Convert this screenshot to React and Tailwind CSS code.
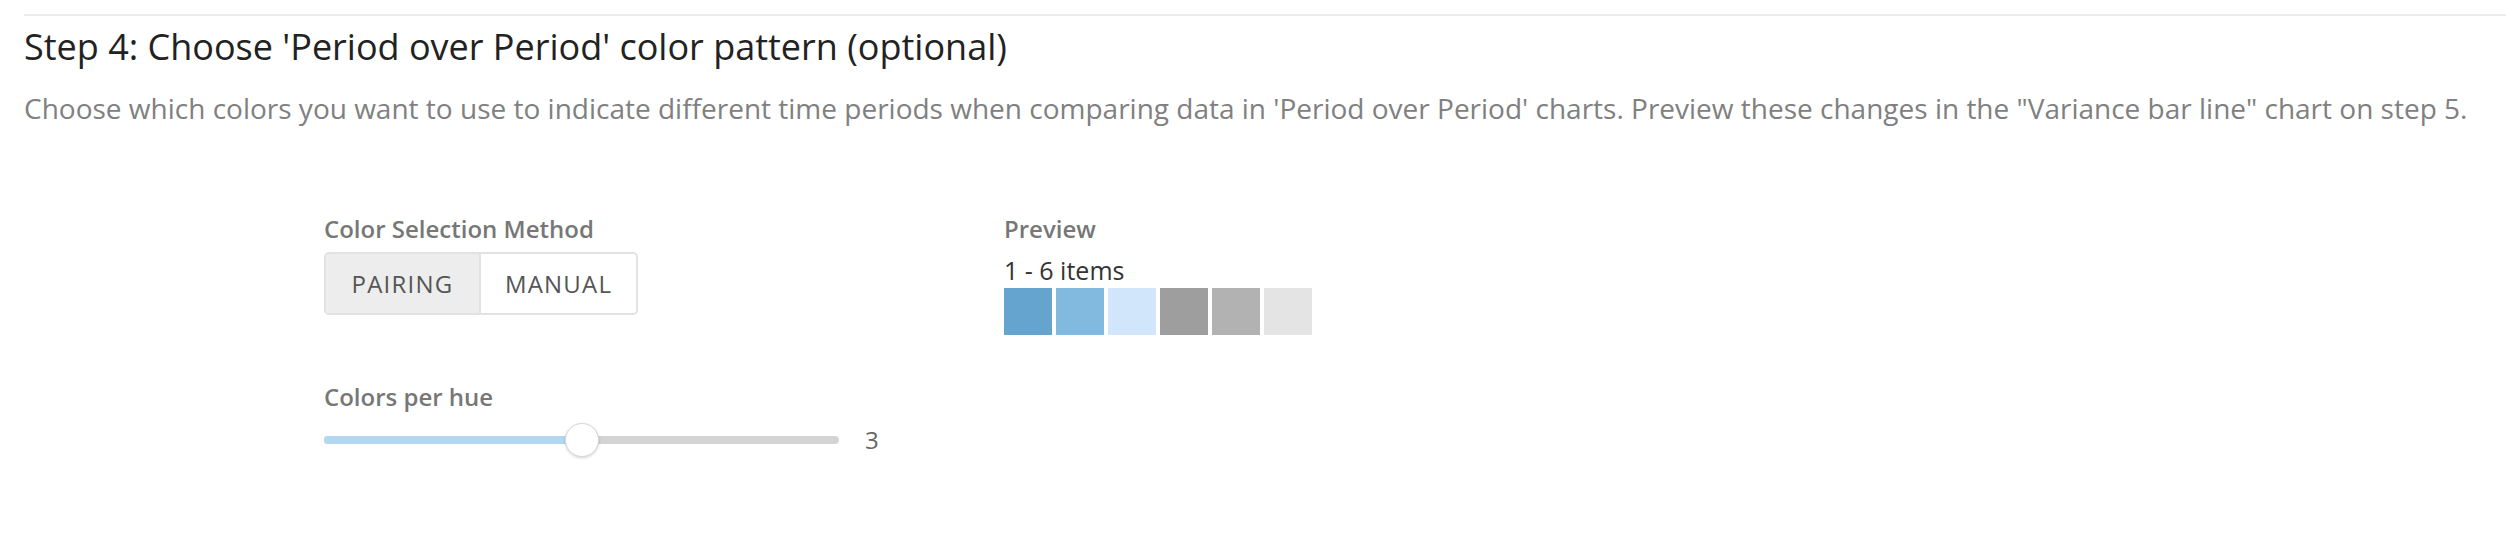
const swatches = ['#65a4ce', '#82b9de', '#d1e6fa', '#9e9e9e', '#b2b2b2', '#e4e4e4'];

function Slider({ min, max, value }) {
  const pct = ((value - min) / (max - min)) * 100;
  return (
    <div className="flex items-center">
      <div className="relative flex h-[34px] w-[515px] items-center">
        <div className="h-[8px] w-full rounded-full bg-[#d4d4d4]" />
        <div
          className="absolute left-0 h-[8px] rounded-full bg-[#b2d7f0]"
          style={{ width: pct + '%' }}
        />
        <div
          className="absolute top-0 h-[34px] w-[34px] -translate-x-1/2 rounded-full border border-[#d8d8d8] bg-white shadow-[0_1px_3px_rgba(0,0,0,0.18)]"
          style={{ left: pct + '%' }}
        />
      </div>
      <span className="ml-[26px] text-[24px] leading-[34px] text-[#666]">{value}</span>
    </div>
  );
}

export default function App() {
  return (
    <div className="h-[542px] w-[2506px] bg-white font-['Open_Sans',sans-serif]">
      <div className="pl-[24px] pt-[14px]">
        <div className="border-t-2 border-[#ececec] pt-[7px]">
          <h2 className="text-[36px] leading-[48px] text-[#222]">
            Step 4: Choose 'Period over Period' color pattern (optional)
          </h2>
          <p className="mt-[17px] text-[28px] leading-[40px] text-[#808080]">
            Choose which colors you want to use to indicate different time periods when comparing data in
            'Period over Period' charts. Preview these changes in the "Variance bar line" chart on step 5.
          </p>

          <div className="ml-[300px] mt-[85px] flex">
            {/* left: method + colors per hue */}
            <div className="w-[680px]">
              <div className="text-[24px] font-semibold leading-[32px] text-[#777]">
                Color Selection Method
              </div>
              <div className="mt-[7px] inline-flex h-[63px] overflow-hidden rounded-[5px] border-2 border-[#e2e2e2]">
                <button className="w-[153px] bg-[#ededed] text-[24px] font-medium tracking-[1.2px] text-[#555]">
                  PAIRING
                </button>
                <button className="w-[157px] border-l-2 border-[#e2e2e2] bg-white text-[24px] font-medium tracking-[1.2px] text-[#555]">
                  MANUAL
                </button>
              </div>

              <div className="mt-[66px] text-[24px] font-semibold leading-[32px] text-[#777]">
                Colors per hue
              </div>
              <div className="mt-[10px]">
                <Slider min={1} max={5} value={3} />
              </div>
            </div>

            {/* right: preview */}
            <div>
              <div className="text-[24px] font-semibold leading-[32px] text-[#777]">Preview</div>
              <div className="mt-[8px] text-[25px] leading-[34px] text-[#333]">1 - 6 items</div>
              <div className="mt-[1px] flex gap-[4px]">
                {swatches.map((c) => (
                  <div key={c} className="h-[47px] w-[48px]" style={{ backgroundColor: c }} />
                ))}
              </div>
            </div>
          </div>
        </div>
      </div>
    </div>
  );
}
